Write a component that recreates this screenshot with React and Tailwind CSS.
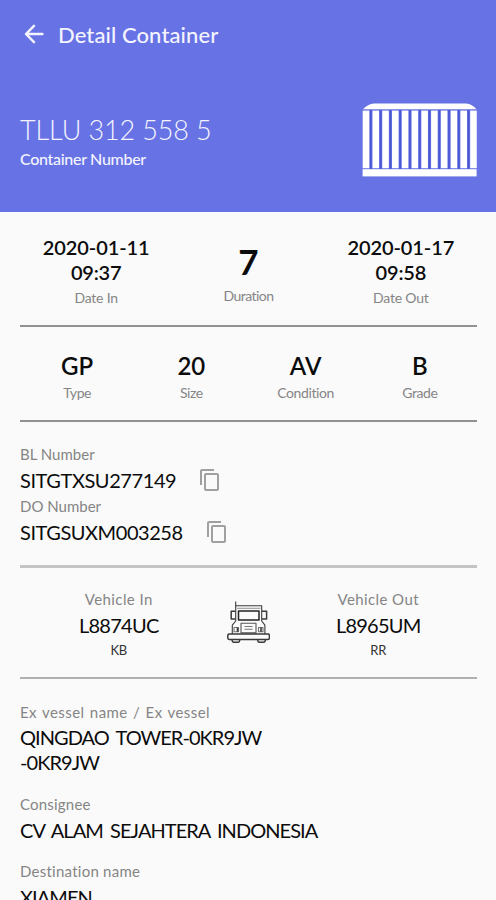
import React from 'react';
import { MdContentCopy } from 'react-icons/md';

const summary = [
    { label: 'Type', value: 'GP' },
    { label: 'Size', value: '20' },
    { label: 'Condition', value: 'AV' },
    { label: 'Grade', value: 'B' },
];

const BackIcon = () => (
    <svg className="mb-[2px] h-5 w-5" viewBox="0 0 20 20" fill="none" stroke="currentColor" strokeWidth="2.5" strokeLinecap="round" strokeLinejoin="round">
        <path d="M18.4 10H2.4M10 1.8L2 10l8 8.2" />
    </svg>
);

const ContainerIcon = () => (
    <svg className="h-[74px] w-[115px]" viewBox="0 0 115 74">
        <path d="M1 6.2C4 3 8 .8 12 .5h92c4 .3 8 2.500 10.500 5.700z" fill="#fff" />
        <rect x="1" y="7" width="113.4" height="59" fill="#6772e4" />
        {Array.from({ length: 11 }).map((_, i) => (
            <rect key={i} x={8 + i * 9.77} y="7" width="1.7" height="59" fill="#4a57d2" />
        ))}
        {Array.from({ length: 12 }).map((_, i) => (
            <rect key={i} x={0.7 + i * 9.77} y="7.6" width="6.6" height="57.6" fill="#fff" />
        ))}
        <rect x=".6" y="66.2" width="114" height="7.2" fill="#fff" />
    </svg>
);

const TruckIcon = () => (
    <svg className="h-[42px] w-[43px]" viewBox="0 0 43 42" fill="none" stroke="#3a3a3a" strokeWidth="1.1" strokeLinejoin="round">
        <path d="M8.7 .5v19.500l-3.400 4.200V33" />
        <path d="M8.700 4.800h26V20l3.200 4.200V33" />
        <path d="M10 7.300h23.500" stroke="#999" />
        <rect x="11.500" y="10" width="20.500" height="9" strokeWidth="1.500" stroke="#222" />
        <path d="M8.500 10.300H4.200v7.600h4.300M35 10.300h4.600v7.600H35" strokeWidth="1.500" />
        <rect x="14" y="22.300" width="15" height="9.600" stroke="#555" />
        <path d="M17.500 25.500h8M17.500 28.300h8" stroke="#777" />
        <path d="M7 26.500h4.500v4.200H7zM31.500 26.500H36v4.200h-4.500z" stroke="#777" />
        <path d="M10.500 26.500v4.200M34 26.500v4.200" strokeWidth="1.600" />
        <rect x=".8" y="33" width="41.600" height="5.400" rx="1.400" strokeWidth="1.500" />
        <path d="M5.200 38.400v1.500q.3 1.300 1.500 1.300h4.400q1.200 0 1.500-1.300v-1.500M30.800 38.400v1.500q.3 1.300 1.500 1.300h4.400q1.200 0 1.500-1.300v-1.500" strokeWidth="1.500" />
    </svg>
);

const DateColumn = ({ date, time, label }) => (
    <div className="pt-[23px] text-center">
        <p className="text-[20px] font-semibold leading-[25px] tracking-[-0.1px]">{date}</p>
        <p className="text-[20px] font-semibold leading-[25px] tracking-[-0.2px]">{time}</p>
        <p className="text-[14px] leading-[25px] tracking-[-0.2px] text-[#858585]">{label}</p>
    </div>
);

const Vehicle = ({ label, plate, code }) => (
    <div className="pt-[18px] text-center">
        <p className="text-[15px] leading-[26px] tracking-[0.4px] text-[#858585]">{label}</p>
        <p className="text-[20px] leading-[26px] tracking-[-0.75px]">{plate}</p>
        <p className="text-[13px] leading-[24px] tracking-[-0.2px] text-[#333]">{code}</p>
    </div>
);

const App = () => {
    return (
        <div className="h-[900px] w-full overflow-hidden bg-[#fafafa] font-['Lato',sans-serif] text-[#0c0c0c]">
            <header className="h-[212px] bg-[#6772e4] pl-5 pr-[19px] text-[#f4f4ff]">
                <div className="flex h-[70px] items-center gap-[14px] pl-1">
                    <BackIcon />
                    <h1 className="text-[22px] font-medium leading-7 tracking-[0.1px]">Detail Container</h1>
                </div>
                <div className="flex items-start justify-between pt-[33px]">
                    <div className="pt-[10px]">
                        <p className="text-[27px] font-light leading-[34px] tracking-[-0.12px]">TLLU 312 558 5</p>
                        <p className="text-[16px] font-medium leading-[24px] tracking-[-0.3px]">Container Number</p>
                    </div>
                    <ContainerIcon />
                </div>
            </header>

            <main className="pl-5 pr-[19px]">
                <section className="grid h-[115px] grid-cols-3 border-b-2 border-[#919191]">
                    <DateColumn date="2020-01-11" time="09:37" label="Date In" />
                    <div className="pt-[29px] text-center">
                        <p className="text-[35px] font-bold leading-[40px]">7</p>
                        <p className="pt-[2px] text-[14px] leading-[25px] tracking-[-0.55px] text-[#858585]">Duration</p>
                    </div>
                    <DateColumn date="2020-01-17" time="09:58" label="Date Out" />
                </section>

                <section className="grid h-[95px] grid-cols-4 border-b-2 border-[#919191] pt-[25px] text-center">
                    {summary.map(item => (
                        <div key={item.label}>
                            <p className="text-[24px] font-semibold leading-[28px]">{item.value}</p>
                            <p className="text-[14px] leading-[26px] tracking-[-0.4px] text-[#858585]">{item.label}</p>
                        </div>
                    ))}
                </section>

                <section className="h-[146px] border-b-3 border-[#c4c4c4] pt-[19px]">
                    <p className="text-[15px] leading-[26px] text-[#858585]">BL Number</p>
                    <div className="flex h-[26px] items-center gap-[22px]">
                        <p className="text-[20px] tracking-[-0.42px]">SITGTXSU277149</p>
                        <MdContentCopy className="h-6 w-6 text-[#a0a0a0]" />
                    </div>
                    <p className="text-[15px] leading-[26px] text-[#858585]">DO Number</p>
                    <div className="flex h-[26px] items-center gap-[22px]">
                        <p className="text-[20px] tracking-[-0.45px]">SITGSUXM003258</p>
                        <MdContentCopy className="h-6 w-6 text-[#a0a0a0]" />
                    </div>
                </section>

                <section className="grid h-[111px] grid-cols-[1fr_62px_1fr] border-b-2 border-[#b0b0b0]">
                    <Vehicle label="Vehicle In" plate="L8874UC" code="KB" />
                    <div className="flex justify-center pt-[33px]">
                        <TruckIcon />
                    </div>
                    <Vehicle label="Vehicle Out" plate="L8965UM" code="RR" />
                </section>

                <section className="pt-5">
                    <p className="text-[15px] leading-[26px] tracking-[0.45px] text-[#858585] [word-spacing:1px]">Ex vessel name / Ex vessel</p>
                    <p className="text-[20px] leading-[25px] tracking-[-0.95px] [word-spacing:3px]">QINGDAO TOWER-0KR9JW</p>
                    <p className="text-[20px] leading-[25px] tracking-[-0.95px]">-0KR9JW</p>
                    <p className="pt-4 text-[15px] leading-[26px] tracking-[0.2px] text-[#858585]">Consignee</p>
                    <p className="text-[20px] leading-[26px] tracking-[-0.95px] [word-spacing:3px]">CV ALAM SEJAHTERA INDONESIA</p>
                    <p className="pt-[15px] text-[15px] leading-[26px] tracking-[0.25px] text-[#858585]">Destination name</p>
                    <p className="text-[20px] leading-[26px] tracking-[-0.95px]">XIAMEN</p>
                </section>
            </main>
        </div>
    );
};

export default App;
